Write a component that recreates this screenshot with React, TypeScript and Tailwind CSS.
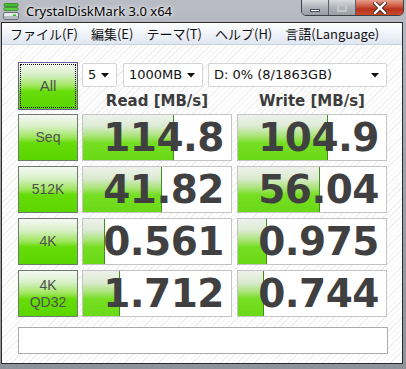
import React from "react";

const rows = [
  { label: ["Seq"], read: "114.8", rw: 91, write: "104.9", ww: 90 },
  { label: ["512K"], read: "41.82", rw: 79, write: "56.04", ww: 82 },
  { label: ["4K"], read: "0.561", rw: 22, write: "0.975", ww: 29 },
  { label: ["4K", "QD32"], read: "1.712", rw: 37, write: "0.744", ww: 26 },
];

const menus = ["ファイル(F)", "編集(E)", "テーマ(T)", "ヘルプ(H)", "言語(Language)"];

const btnBg =
  "bg-[linear-gradient(to_bottom,#f6f9f4_0%,#d8f0c8_25%,#9ee65c_50%,#66dc08_62%,#5ad600_100%)]";

const Arrow = () => (
  <svg width="8" height="5" viewBox="0 0 8 5" className="shrink-0">
    <path d="M0 0 H8 L4 4.5 Z" fill="#111" />
  </svg>
);

const Select = ({ text, w }: { text: string; w: string }) => (
  <div
    className={`${w} h-[24px] bg-white border border-[#d4d4d4] rounded-[2px] flex items-center justify-between pl-[5px] pr-[7px] text-[13px] text-[#111] font-['DejaVu_Sans',sans-serif]`}
  >
    <span>{text}</span>
    <Arrow />
  </div>
);

const ValueBox = ({ value, fill }: { value: string; fill: number }) => (
  <div className="relative w-[150px] h-[47px] bg-white border border-[#c4c4c4] flex items-center justify-end pr-[7px]">
    <div
      className="absolute left-0 top-0 bottom-0 border-r border-[#3f8f1c] bg-[linear-gradient(to_bottom,#eef1ec_0%,#dcebd2_25%,#a6e372_48%,#76de22_62%,#6ad916_100%)]"
      style={{ width: fill }}
    />
    <span className="relative font-['DejaVu_Sans',sans-serif] font-bold text-[39px] leading-none text-[#404040] tracking-[-0.5px]">
      {value}
    </span>
  </div>
);

export default function App() {
  return (
    <div className="w-[406px] h-[369px] overflow-hidden flex flex-col bg-[linear-gradient(to_bottom,#b9bcc4,#9fa3ac_40%,#8e929b)]">
      {/* title bar */}
      <div className="h-[22px] flex items-start shrink-0 relative">
        <svg width="16" height="18" viewBox="0 0 16 18" className="ml-[3px] mt-[3px]">
          <rect x="1" y="0.5" width="14" height="3" rx="1" fill="#3fbf2a" stroke="#1d6e12" strokeWidth="0.6" />
          <rect x="1" y="4.5" width="14" height="3" rx="1" fill="#56d23a" stroke="#1d6e12" strokeWidth="0.6" />
          <rect x="0.5" y="9.5" width="15" height="7" rx="1.5" fill="#e6e8ea" stroke="#6a6e74" />
          <rect x="1" y="13" width="14" height="3" fill="#b8bcc2" />
          <rect x="10" y="11.5" width="3" height="1.5" fill="#2fc02a" />
        </svg>
        <span className="ml-[7px] mt-[3px] text-[13px] leading-[16px] text-black font-['Noto_Sans',sans-serif] [text-shadow:0_0_6px_#fff,0_0_3px_#fff]">
          CrystalDiskMark 3.0 x64
        </span>
        <div className="ml-auto mr-[2px] mt-[-1px] flex h-[17px] border border-[#3c3f46] rounded-b-[5px] overflow-hidden">
          <div className="w-[27px] flex items-center justify-center border-r border-[#5a5e66] bg-[linear-gradient(to_bottom,#d8dbe0,#aeb2ba_50%,#9a9ea7)]">
            <div className="w-[10px] h-[3px] mt-[5px] bg-white border border-[#4a4d55]" />
          </div>
          <div className="w-[27px] flex items-center justify-center border-r border-[#5a5e66] bg-[linear-gradient(to_bottom,#d8dbe0,#aeb2ba_50%,#9a9ea7)]">
            <div className="w-[10px] h-[8px] border-2 border-[#c4c7cc] bg-transparent" />
          </div>
          <div className="w-[47px] flex items-center justify-center bg-[linear-gradient(to_bottom,#e6a08c,#c9523a_45%,#b8321c_60%,#c64a2c)]">
            <svg width="14" height="12" viewBox="0 0 14 12">
              <path d="M2 1 L12 11 M12 1 L2 11" stroke="#3a2a28" strokeWidth="4.2" strokeLinecap="square" />
              <path d="M2 1 L12 11 M12 1 L2 11" stroke="#fff" strokeWidth="2.4" strokeLinecap="square" />
            </svg>
          </div>
        </div>
      </div>

      {/* body */}
      <div className="flex-1 flex pl-[1px] pr-[3px] pb-[5px]">
        <div className="flex-1 flex flex-col border border-[#2b2b2e]">
          {/* menu */}
          <div className="h-[22px] shrink-0 flex items-center gap-[13px] pl-[8px] bg-[linear-gradient(to_bottom,#ffffff,#f4f6fa_40%,#dfe6f2)] border-b border-[#c9d1e0] text-[13px] text-[#111] font-['Noto_Sans_CJK_JP',sans-serif]">
            {menus.map((m) => (
              <span key={m}>{m}</span>
            ))}
          </div>

          {/* content */}
          <div className="flex-1 flex flex-col pl-[16px] pt-[17px] bg-white bg-[repeating-linear-gradient(135deg,#ffffff_0px,#ffffff_3px,#efefef_3px,#efefef_4px)]">
            <div className="flex gap-[4px]">
              <div
                className={`w-[60px] h-[48px] ${btnBg} border border-[#6c5a9c] outline-1 outline-dotted outline-offset-[-3px] outline-black flex items-center justify-center text-[15px] text-[#505050] font-['Liberation_Sans',sans-serif]`}
              >
                All
              </div>
              <div className="w-[305px] flex flex-col">
                <div className="flex mt-[1px]">
                  <Select text="5" w="w-[35px]" />
                  <div className="ml-[6px]">
                    <Select text="1000MB" w="w-[80px]" />
                  </div>
                  <div className="ml-[5px]">
                    <Select text="D: 0% (8/1863GB)" w="w-[179px]" />
                  </div>
                </div>
                <div className="flex gap-[5px] mt-auto font-['DejaVu_Sans',sans-serif] font-bold text-[15px] leading-[18px] text-[#3c3c3c]">
                  <div className="w-[150px] text-center">Read [MB/s]</div>
                  <div className="w-[150px] text-center">Write [MB/s]</div>
                </div>
              </div>
            </div>

            <div className="flex flex-col gap-[5px] mt-[4px]">
              {rows.map((r) => (
                <div key={r.read} className="flex">
                  <div
                    className={`w-[60px] h-[47px] ${btnBg} border border-[#6e7a6e] flex flex-col items-center justify-center text-[14px] leading-[17px] text-[#505050] font-['Liberation_Sans',sans-serif]`}
                  >
                    {r.label.map((l) => (
                      <span key={l}>{l}</span>
                    ))}
                  </div>
                  <div className="ml-[4px]">
                    <ValueBox value={r.read} fill={r.rw} />
                  </div>
                  <div className="ml-[5px]">
                    <ValueBox value={r.write} fill={r.ww} />
                  </div>
                </div>
              ))}
            </div>

            <div className="mt-[10px] w-[370px] h-[27px] bg-white border border-[#ababab]" />
          </div>
        </div>
      </div>
    </div>
  );
}
